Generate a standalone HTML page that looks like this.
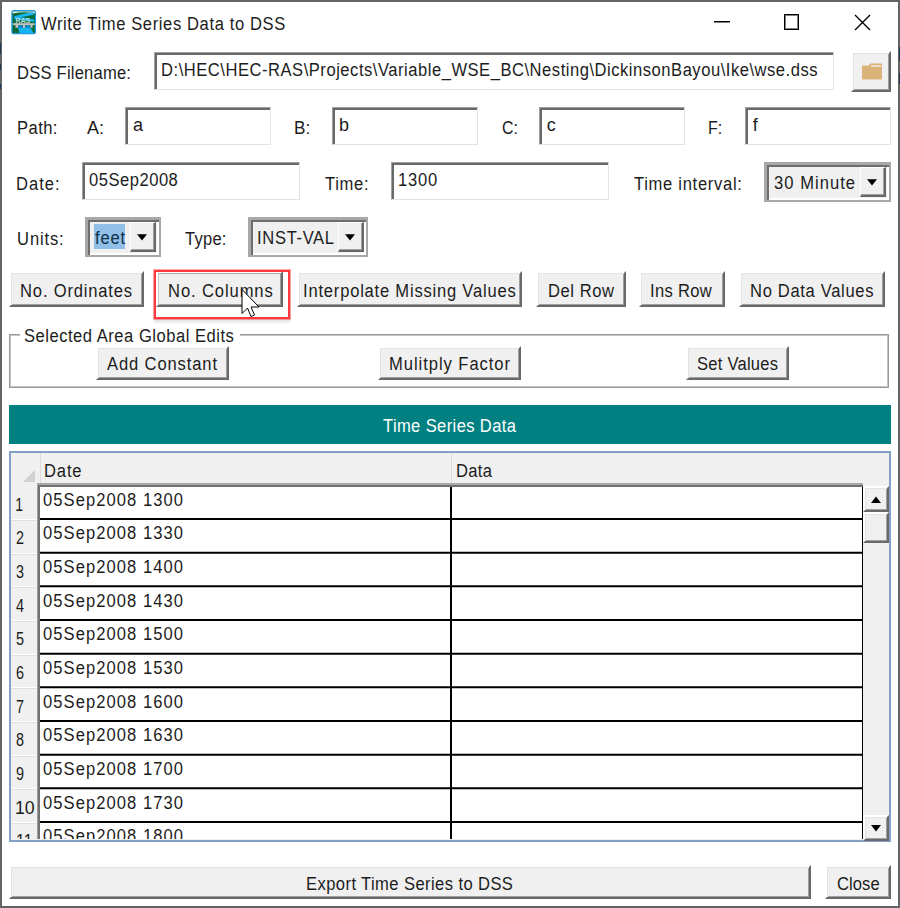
<!DOCTYPE html><html><head><meta charset="utf-8"><style>
html,body{margin:0;padding:0;width:900px;height:908px;overflow:hidden;background:#fff;}
body{position:relative;font-family:"Liberation Sans",sans-serif;}
.t{position:absolute;white-space:pre;line-height:normal;}
.r{position:absolute;box-sizing:border-box;}
</style></head><body>
<div class="r" style="left:0px;top:0px;width:900px;height:908px;border:2px solid #646464;"></div>
<div class="r" style="left:0px;top:43px;width:1px;height:11px;background:#1c3a58;"></div>
<div class="r" style="left:0px;top:64px;width:1px;height:6px;background:#1c3a58;"></div>
<div class="r" style="left:0px;top:84px;width:1px;height:5px;background:#1c3a58;"></div>
<div class="r" style="left:899px;top:47px;width:1px;height:14px;background:#1c3a58;"></div>
<div class="r" style="left:899px;top:73px;width:1px;height:11px;background:#1c3a58;"></div>
<svg class="r" style="left:11px;top:10px" width="26" height="26" viewBox="0 0 26 26">
<rect x="0.3" y="0" width="24.7" height="24.3" rx="2.5" fill="#1a9ae0"/>
<rect x="1.6" y="1.4" width="22.2" height="21.6" fill="#0a6b36"/>
<path d="M1.6 1.4 H23.8 V3.2 Q16 1.6 8 2.6 Q4 3 1.6 3.6Z" fill="#eef6f2"/>
<path d="M21.5 3.6 Q12 5 3.5 7.6 Q14 9 22 10.6" stroke="#1ab4f0" stroke-width="2.6" fill="none" stroke-linecap="round"/>
<text x="11.8" y="12.6" font-size="7" font-weight="bold" fill="#cfe8e8" text-anchor="middle" font-family="Liberation Sans" opacity="0.85">RAS</text>
<path d="M7 17.8 H19.5 L22.5 23 H8.5Z" fill="#14b4f0"/>
<rect x="1.6" y="13.2" width="22.2" height="1.9" fill="#c8c2c2"/>
<path d="M4.5 15 H7.2 V17.8 H4.5Z M12 15 H14 V17.8 H12Z M19.5 15 H21.5 V17.8 H19.5Z" fill="#c8c2c2"/>
<path d="M7.2 17.8 Q7.2 15 9.6 15 Q12 15 12 17.8Z M14 17.8 Q14 15 16.8 15 Q19.5 15 19.5 17.8Z" fill="#0a8ee0"/>
</svg>
<div class="t" style="left:40.50px;top:14.00px;font-size:18px;letter-spacing:0.668px;color:#1c1c1c;transform-origin:-0.00px 0;transform:translateX(0.00px) scaleX(0.92);">Write Time Series Data to DSS</div>
<div class="r" style="left:714px;top:21px;width:16px;height:1px;background:#000;"></div>
<div class="r" style="left:714px;top:22px;width:16px;height:1px;background:#000;opacity:0.5"></div>
<div class="r" style="left:784px;top:14px;width:15px;height:16px;border:1px solid #000;box-shadow:inset 0 0 0 1px rgba(0,0,0,0.5);"></div>
<svg class="r" style="left:853px;top:13px" width="19" height="19"><path d="M2 2L17 17M17 2L2 17" stroke="#000" stroke-width="1.4"/></svg>
<div class="t" style="left:18.00px;top:63.00px;font-size:18px;letter-spacing:0.225px;color:#1c1c1c;transform-origin:1.00px 0;transform:translateX(-1.00px) scaleX(0.92);">DSS Filename:</div>
<div class="r" style="left:154px;top:52px;width:680px;height:38px;background:#fff;border-top:1px solid #a0a0a0;border-left:1px solid #a0a0a0;border-right:1px solid #e3e3e3;border-bottom:1px solid #e3e3e3;box-shadow:inset 2px 2px 0 #696969;"></div>
<div class="t" style="left:162.00px;top:60.00px;font-size:18px;letter-spacing:0.570px;color:#1c1c1c;transform-origin:1.00px 0;transform:translateX(-1.00px) scaleX(0.92);">D:\HEC\HEC-RAS\Projects\Variable_WSE_BC\Nesting\DickinsonBayou\Ike\wse.dss</div>
<div class="r" style="left:851px;top:51px;width:40px;height:41px;background:#f0f0f0;border-top:2px solid #fff;border-left:2px solid #fff;border-right:2px solid #696969;border-bottom:2px solid #696969;box-shadow:inset 1px 1px 0 #e3e3e3,inset -1px -1px 0 #a0a0a0;"></div>
<svg class="r" style="left:861px;top:62px" width="22" height="18"><path d="M1 3.5 H8 L9 1.5 H21 V17.5 H1Z" fill="#dab378"/><rect x="10" y="3" width="10" height="2" fill="#ece0cc"/></svg>
<div class="t" style="left:17.50px;top:118.00px;font-size:18px;letter-spacing:0.455px;color:#1c1c1c;transform-origin:1.00px 0;transform:translateX(-1.00px) scaleX(0.92);">Path:</div>
<div class="t" style="left:87.00px;top:118.00px;font-size:18px;color:#1c1c1c;transform-origin:-0.00px 0;transform:translateX(0.00px) scaleX(1.000);">A:</div>
<div class="r" style="left:125px;top:107px;width:146px;height:38px;background:#fff;border-top:1px solid #a0a0a0;border-left:1px solid #a0a0a0;border-right:1px solid #e3e3e3;border-bottom:1px solid #e3e3e3;box-shadow:inset 2px 2px 0 #696969;"></div>
<div class="t" style="left:133.00px;top:115.00px;font-size:18px;letter-spacing:0.000px;color:#1c1c1c;">a</div>
<div class="t" style="left:295.00px;top:118.00px;font-size:18px;color:#1c1c1c;transform-origin:1.00px 0;transform:translateX(-1.00px) scaleX(0.953);">B:</div>
<div class="r" style="left:332px;top:107px;width:146px;height:38px;background:#fff;border-top:1px solid #a0a0a0;border-left:1px solid #a0a0a0;border-right:1px solid #e3e3e3;border-bottom:1px solid #e3e3e3;box-shadow:inset 2px 2px 0 #696969;"></div>
<div class="t" style="left:339.00px;top:115.00px;font-size:18px;letter-spacing:0.000px;color:#1c1c1c;">b</div>
<div class="t" style="left:501.70px;top:118.00px;font-size:18px;color:#1c1c1c;transform-origin:-0.00px 0;transform:translateX(0.00px) scaleX(0.882);">C:</div>
<div class="r" style="left:539px;top:107px;width:146px;height:38px;background:#fff;border-top:1px solid #a0a0a0;border-left:1px solid #a0a0a0;border-right:1px solid #e3e3e3;border-bottom:1px solid #e3e3e3;box-shadow:inset 2px 2px 0 #696969;"></div>
<div class="t" style="left:546.70px;top:115.00px;font-size:18px;letter-spacing:0.000px;color:#1c1c1c;">c</div>
<div class="t" style="left:709.30px;top:118.00px;font-size:18px;color:#1c1c1c;transform-origin:1.00px 0;transform:translateX(-1.00px) scaleX(0.886);">F:</div>
<div class="r" style="left:745px;top:107px;width:146px;height:38px;background:#fff;border-top:1px solid #a0a0a0;border-left:1px solid #a0a0a0;border-right:1px solid #e3e3e3;border-bottom:1px solid #e3e3e3;box-shadow:inset 2px 2px 0 #696969;"></div>
<div class="t" style="left:752.70px;top:115.00px;font-size:18px;letter-spacing:0.000px;color:#1c1c1c;">f</div>
<div class="t" style="left:17.00px;top:173.50px;font-size:18px;letter-spacing:1.076px;color:#1c1c1c;transform-origin:1.00px 0;transform:translateX(-1.00px) scaleX(0.92);">Date:</div>
<div class="r" style="left:82px;top:162px;width:218px;height:38px;background:#fff;border-top:1px solid #a0a0a0;border-left:1px solid #a0a0a0;border-right:1px solid #e3e3e3;border-bottom:1px solid #e3e3e3;box-shadow:inset 2px 2px 0 #696969;"></div>
<div class="t" style="left:89.00px;top:170.30px;font-size:18px;letter-spacing:0.555px;color:#1c1c1c;transform-origin:-0.00px 0;transform:translateX(0.00px) scaleX(0.92);">05Sep2008</div>
<div class="t" style="left:325.00px;top:173.50px;font-size:18px;letter-spacing:0.743px;color:#1c1c1c;transform-origin:-0.00px 0;transform:translateX(0.00px) scaleX(0.92);">Time:</div>
<div class="r" style="left:391px;top:162px;width:218px;height:38px;background:#fff;border-top:1px solid #a0a0a0;border-left:1px solid #a0a0a0;border-right:1px solid #e3e3e3;border-bottom:1px solid #e3e3e3;box-shadow:inset 2px 2px 0 #696969;"></div>
<div class="t" style="left:399.00px;top:170.30px;font-size:18px;letter-spacing:0.866px;color:#1c1c1c;transform-origin:1.00px 0;transform:translateX(-1.00px) scaleX(0.92);">1300</div>
<div class="t" style="left:634.00px;top:173.50px;font-size:18px;letter-spacing:0.765px;color:#1c1c1c;transform-origin:-0.00px 0;transform:translateX(0.00px) scaleX(0.92);">Time interval:</div>
<div class="r" style="left:764px;top:162px;width:127px;height:40px;background:#f0f0f0;border-top:3px solid #a8a8a8;border-left:3px solid #a8a8a8;border-right:2px solid #a8a8a8;border-bottom:2px solid #a8a8a8;box-shadow:inset 2px 2px 0 #6e6e6e,inset -2px -2px 0 #fff;"></div>
<div class="r" style="left:860px;top:167px;width:26px;height:30px;background:#f0f0f0;border-top:1px solid #fff;border-left:1px solid #fff;border-right:2px solid #696969;border-bottom:2px solid #696969;box-shadow:inset -1px -1px 0 #a0a0a0;"></div>
<svg class="r" style="left:866.0px;top:178.0px" width="12" height="8"><path d="M1 1.2H11L6 7.6Z" fill="#000"/></svg>
<div class="t" style="left:774.00px;top:173.00px;font-size:18px;letter-spacing:1.126px;color:#1c1c1c;transform-origin:-0.00px 0;transform:translateX(0.00px) scaleX(0.92);">30 Minute</div>
<div class="t" style="left:17.70px;top:228.60px;font-size:18px;letter-spacing:0.937px;color:#1c1c1c;transform-origin:1.00px 0;transform:translateX(-1.00px) scaleX(0.92);">Units:</div>
<div class="r" style="left:85px;top:217px;width:76px;height:40px;background:#f0f0f0;border-top:3px solid #a8a8a8;border-left:3px solid #a8a8a8;border-right:2px solid #a8a8a8;border-bottom:2px solid #a8a8a8;box-shadow:inset 2px 2px 0 #6e6e6e,inset -2px -2px 0 #fff;"></div>
<div class="r" style="left:130px;top:222px;width:26px;height:30px;background:#f0f0f0;border-top:1px solid #fff;border-left:1px solid #fff;border-right:2px solid #696969;border-bottom:2px solid #696969;box-shadow:inset -1px -1px 0 #a0a0a0;"></div>
<svg class="r" style="left:136.0px;top:233.0px" width="12" height="8"><path d="M1 1.2H11L6 7.6Z" fill="#000"/></svg>
<div class="r" style="left:94px;top:224px;width:31px;height:25px;background:#90c0e8;"></div>
<div class="t" style="left:95.00px;top:228.00px;font-size:18px;letter-spacing:0.862px;color:#10304a;transform-origin:-0.00px 0;transform:translateX(0.00px) scaleX(0.92);">feet</div>
<div class="t" style="left:184.50px;top:228.60px;font-size:18px;letter-spacing:0.250px;color:#1c1c1c;transform-origin:-0.00px 0;transform:translateX(0.00px) scaleX(0.92);">Type:</div>
<div class="r" style="left:248px;top:217px;width:120px;height:40px;background:#f0f0f0;border-top:3px solid #a8a8a8;border-left:3px solid #a8a8a8;border-right:2px solid #a8a8a8;border-bottom:2px solid #a8a8a8;box-shadow:inset 2px 2px 0 #6e6e6e,inset -2px -2px 0 #fff;"></div>
<div class="r" style="left:338px;top:222px;width:26px;height:30px;background:#f0f0f0;border-top:1px solid #fff;border-left:1px solid #fff;border-right:2px solid #696969;border-bottom:2px solid #696969;box-shadow:inset -1px -1px 0 #a0a0a0;"></div>
<svg class="r" style="left:344.0px;top:233.0px" width="12" height="8"><path d="M1 1.2H11L6 7.6Z" fill="#000"/></svg>
<div class="t" style="left:257.60px;top:228.00px;font-size:18px;letter-spacing:0.704px;color:#1c1c1c;transform-origin:1.00px 0;transform:translateX(-1.00px) scaleX(0.92);">INST-VAL</div>
<div class="r" style="left:9px;top:271px;width:135px;height:36px;background:#f0f0f0;border-top:2px solid #fff;border-left:2px solid #fff;border-right:2px solid #696969;border-bottom:2px solid #696969;box-shadow:inset 1px 1px 0 #e3e3e3,inset -1px -1px 0 #a0a0a0;"></div>
<div class="t" style="left:20.70px;top:280.70px;font-size:18px;letter-spacing:0.884px;color:#1c1c1c;transform-origin:1.00px 0;transform:translateX(-1.00px) scaleX(0.92);">No. Ordinates</div>
<div class="r" style="left:156px;top:271px;width:127px;height:36px;background:#f0f0f0;border-top:2px solid #fff;border-left:2px solid #fff;border-right:2px solid #696969;border-bottom:2px solid #696969;box-shadow:inset 1px 1px 0 #e3e3e3,inset -1px -1px 0 #a0a0a0;"></div>
<div class="r" style="left:158px;top:273px;width:123px;height:32px;border-top:1px solid #a8a8a8;border-left:1px solid #c8c8c8;"></div>
<div class="t" style="left:169.00px;top:280.70px;font-size:18px;letter-spacing:0.968px;color:#1c1c1c;transform-origin:1.00px 0;transform:translateX(-1.00px) scaleX(0.92);">No. Columns</div>
<div class="r" style="left:297px;top:271px;width:225px;height:36px;background:#f0f0f0;border-top:2px solid #fff;border-left:2px solid #fff;border-right:2px solid #696969;border-bottom:2px solid #696969;box-shadow:inset 1px 1px 0 #e3e3e3,inset -1px -1px 0 #a0a0a0;"></div>
<div class="t" style="left:304.00px;top:280.70px;font-size:18px;letter-spacing:0.853px;color:#1c1c1c;transform-origin:1.00px 0;transform:translateX(-1.00px) scaleX(0.92);">Interpolate Missing Values</div>
<div class="r" style="left:536px;top:271px;width:90px;height:36px;background:#f0f0f0;border-top:2px solid #fff;border-left:2px solid #fff;border-right:2px solid #696969;border-bottom:2px solid #696969;box-shadow:inset 1px 1px 0 #e3e3e3,inset -1px -1px 0 #a0a0a0;"></div>
<div class="t" style="left:548.50px;top:280.70px;font-size:18px;letter-spacing:0.584px;color:#1c1c1c;transform-origin:1.00px 0;transform:translateX(-1.00px) scaleX(0.92);">Del Row</div>
<div class="r" style="left:639px;top:271px;width:86px;height:36px;background:#f0f0f0;border-top:2px solid #fff;border-left:2px solid #fff;border-right:2px solid #696969;border-bottom:2px solid #696969;box-shadow:inset 1px 1px 0 #e3e3e3,inset -1px -1px 0 #a0a0a0;"></div>
<div class="t" style="left:651.30px;top:280.70px;font-size:18px;letter-spacing:0.340px;color:#1c1c1c;transform-origin:1.00px 0;transform:translateX(-1.00px) scaleX(0.92);">Ins Row</div>
<div class="r" style="left:739px;top:271px;width:146px;height:36px;background:#f0f0f0;border-top:2px solid #fff;border-left:2px solid #fff;border-right:2px solid #696969;border-bottom:2px solid #696969;box-shadow:inset 1px 1px 0 #e3e3e3,inset -1px -1px 0 #a0a0a0;"></div>
<div class="t" style="left:750.80px;top:280.70px;font-size:18px;letter-spacing:0.724px;color:#1c1c1c;transform-origin:1.00px 0;transform:translateX(-1.00px) scaleX(0.92);">No Data Values</div>
<div class="r" style="left:154px;top:270px;width:136px;height:49px;border:2px solid #ff3a3f;box-shadow:0 0 0 1px rgba(255,58,63,0.45),0 3px 3px rgba(0,0,0,0.12);"></div>
<div class="r" style="left:9px;top:334px;width:880px;height:54px;border:1px solid #9a9a9a;box-shadow:inset 1px 1px 0 #c4c4c4,inset -1px -1px 0 #c4c4c4;"></div>
<div class="r" style="left:20px;top:326px;width:220px;height:16px;background:#fff;"></div>
<div class="t" style="left:23.50px;top:325.70px;font-size:18px;letter-spacing:0.560px;color:#1c1c1c;transform-origin:-0.00px 0;transform:translateX(0.00px) scaleX(0.92);">Selected Area Global Edits</div>
<div class="r" style="left:96px;top:346px;width:133px;height:34px;background:#f0f0f0;border-top:2px solid #fff;border-left:2px solid #fff;border-right:2px solid #696969;border-bottom:2px solid #696969;box-shadow:inset 1px 1px 0 #e3e3e3,inset -1px -1px 0 #a0a0a0;"></div>
<div class="t" style="left:107.30px;top:353.90px;font-size:18px;letter-spacing:0.954px;color:#1c1c1c;transform-origin:-0.00px 0;transform:translateX(0.00px) scaleX(0.92);">Add Constant</div>
<div class="r" style="left:378px;top:346px;width:143px;height:34px;background:#f0f0f0;border-top:2px solid #fff;border-left:2px solid #fff;border-right:2px solid #696969;border-bottom:2px solid #696969;box-shadow:inset 1px 1px 0 #e3e3e3,inset -1px -1px 0 #a0a0a0;"></div>
<div class="t" style="left:390.40px;top:353.90px;font-size:18px;letter-spacing:1.029px;color:#1c1c1c;transform-origin:1.00px 0;transform:translateX(-1.00px) scaleX(0.92);">Mulitply Factor</div>
<div class="r" style="left:686px;top:346px;width:103px;height:34px;background:#f0f0f0;border-top:2px solid #fff;border-left:2px solid #fff;border-right:2px solid #696969;border-bottom:2px solid #696969;box-shadow:inset 1px 1px 0 #e3e3e3,inset -1px -1px 0 #a0a0a0;"></div>
<div class="t" style="left:697.00px;top:353.90px;font-size:18px;letter-spacing:0.258px;color:#1c1c1c;transform-origin:-0.00px 0;transform:translateX(0.00px) scaleX(0.92);">Set Values</div>
<div class="r" style="left:9px;top:405px;width:882px;height:39px;background:#008080;"></div>
<div class="t" style="left:383.30px;top:415.60px;font-size:18px;letter-spacing:0.412px;color:#fff;transform-origin:-0.00px 0;transform:translateX(0.00px) scaleX(0.92);">Time Series Data</div>
<div class="r" style="left:9px;top:451px;width:882px;height:391px;border:2px solid #82a0c4;background:#f0f0f0;"></div>
<div class="t" style="left:45.00px;top:461.00px;font-size:18px;letter-spacing:0.888px;color:#1c1c1c;transform-origin:1.00px 0;transform:translateX(-1.00px) scaleX(0.92);">Date</div>
<div class="t" style="left:457.00px;top:461.00px;font-size:18px;letter-spacing:0.301px;color:#1c1c1c;transform-origin:1.00px 0;transform:translateX(-1.00px) scaleX(0.92);">Data</div>
<div class="r" style="left:451px;top:453px;width:1px;height:32px;background:#dcdcdc;"></div>
<div class="r" style="left:40px;top:453px;width:1px;height:32px;background:#dcdcdc;"></div>
<svg class="r" style="left:22px;top:469px" width="14" height="14"><path d="M13 1V13H1Z" fill="#d0d0d0"/></svg>
<div class="r" style="left:11px;top:483px;width:852px;height:356px;overflow:hidden">
<div class="r" style="left:26px;top:0px;width:826px;height:417px;background:#fff;border-top:2px solid #a8a8a8;border-left:1px solid #a0a0a0;box-shadow:inset 2px 2px 0 #727272;"></div>
<div class="r" style="left:0px;top:36px;width:26px;height:1px;background:#fff;"></div>
<div class="r" style="left:0px;top:37px;width:26px;height:1px;background:#e0e0e0;"></div>
<div class="r" style="left:0px;top:70px;width:26px;height:1px;background:#fff;"></div>
<div class="r" style="left:0px;top:71px;width:26px;height:1px;background:#e0e0e0;"></div>
<div class="r" style="left:0px;top:103px;width:26px;height:1px;background:#fff;"></div>
<div class="r" style="left:0px;top:104px;width:26px;height:1px;background:#e0e0e0;"></div>
<div class="r" style="left:0px;top:137px;width:26px;height:1px;background:#fff;"></div>
<div class="r" style="left:0px;top:138px;width:26px;height:1px;background:#e0e0e0;"></div>
<div class="r" style="left:0px;top:171px;width:26px;height:1px;background:#fff;"></div>
<div class="r" style="left:0px;top:172px;width:26px;height:1px;background:#e0e0e0;"></div>
<div class="r" style="left:0px;top:204px;width:26px;height:1px;background:#fff;"></div>
<div class="r" style="left:0px;top:205px;width:26px;height:1px;background:#e0e0e0;"></div>
<div class="r" style="left:0px;top:238px;width:26px;height:1px;background:#fff;"></div>
<div class="r" style="left:0px;top:239px;width:26px;height:1px;background:#e0e0e0;"></div>
<div class="r" style="left:0px;top:272px;width:26px;height:1px;background:#fff;"></div>
<div class="r" style="left:0px;top:273px;width:26px;height:1px;background:#e0e0e0;"></div>
<div class="r" style="left:0px;top:305px;width:26px;height:1px;background:#fff;"></div>
<div class="r" style="left:0px;top:306px;width:26px;height:1px;background:#e0e0e0;"></div>
<div class="r" style="left:0px;top:339px;width:26px;height:1px;background:#fff;"></div>
<div class="r" style="left:0px;top:340px;width:26px;height:1px;background:#e0e0e0;"></div>
<svg class="r" style="left:0;top:0" width="852" height="356"><path d="M29 36.00H852" stroke="#000" stroke-width="2"/><path d="M29 69.67H852" stroke="#000" stroke-width="2"/><path d="M29 103.34H852" stroke="#000" stroke-width="2"/><path d="M29 137.01H852" stroke="#000" stroke-width="2"/><path d="M29 170.68H852" stroke="#000" stroke-width="2"/><path d="M29 204.35H852" stroke="#000" stroke-width="2"/><path d="M29 238.02H852" stroke="#000" stroke-width="2"/><path d="M29 271.69H852" stroke="#000" stroke-width="2"/><path d="M29 305.36H852" stroke="#000" stroke-width="2"/><path d="M29 339.03H852" stroke="#000" stroke-width="2"/></svg>
<div class="r" style="left:439px;top:4px;width:2px;height:413px;background:#000;"></div>
<div class="r" style="left:851px;top:4px;width:2px;height:413px;background:#000;"></div>
<div class="t" style="left:32.00px;top:6.60px;font-size:18px;letter-spacing:1.158px;color:#1c1c1c;transform-origin:-0.00px 0;transform:translateX(0.00px) scaleX(0.92);">05Sep2008 1300</div>
<div class="t" style="left:5.20px;top:11.70px;font-size:18px;color:#1c1c1c;transform-origin:1.00px 0;transform:translateX(-1.00px) scaleX(0.778);">1</div>
<div class="t" style="left:32.00px;top:40.27px;font-size:18px;letter-spacing:1.158px;color:#1c1c1c;transform-origin:-0.00px 0;transform:translateX(0.00px) scaleX(0.92);">05Sep2008 1330</div>
<div class="t" style="left:5.20px;top:45.37px;font-size:18px;color:#1c1c1c;transform-origin:-0.00px 0;transform:translateX(0.00px) scaleX(0.800);">2</div>
<div class="t" style="left:32.00px;top:73.94px;font-size:18px;letter-spacing:1.158px;color:#1c1c1c;transform-origin:-0.00px 0;transform:translateX(0.00px) scaleX(0.92);">05Sep2008 1400</div>
<div class="t" style="left:5.20px;top:79.04px;font-size:18px;color:#1c1c1c;transform-origin:-0.00px 0;transform:translateX(0.00px) scaleX(0.800);">3</div>
<div class="t" style="left:32.00px;top:107.61px;font-size:18px;letter-spacing:1.158px;color:#1c1c1c;transform-origin:-0.00px 0;transform:translateX(0.00px) scaleX(0.92);">05Sep2008 1430</div>
<div class="t" style="left:5.20px;top:112.71px;font-size:18px;color:#1c1c1c;transform-origin:-0.00px 0;transform:translateX(0.00px) scaleX(0.800);">4</div>
<div class="t" style="left:32.00px;top:141.28px;font-size:18px;letter-spacing:1.158px;color:#1c1c1c;transform-origin:-0.00px 0;transform:translateX(0.00px) scaleX(0.92);">05Sep2008 1500</div>
<div class="t" style="left:5.20px;top:146.38px;font-size:18px;color:#1c1c1c;transform-origin:-0.00px 0;transform:translateX(0.00px) scaleX(0.800);">5</div>
<div class="t" style="left:32.00px;top:174.95px;font-size:18px;letter-spacing:1.158px;color:#1c1c1c;transform-origin:-0.00px 0;transform:translateX(0.00px) scaleX(0.92);">05Sep2008 1530</div>
<div class="t" style="left:5.20px;top:180.05px;font-size:18px;color:#1c1c1c;transform-origin:-0.00px 0;transform:translateX(0.00px) scaleX(0.800);">6</div>
<div class="t" style="left:32.00px;top:208.62px;font-size:18px;letter-spacing:1.158px;color:#1c1c1c;transform-origin:-0.00px 0;transform:translateX(0.00px) scaleX(0.92);">05Sep2008 1600</div>
<div class="t" style="left:5.20px;top:213.72px;font-size:18px;color:#1c1c1c;transform-origin:-0.00px 0;transform:translateX(0.00px) scaleX(0.800);">7</div>
<div class="t" style="left:32.00px;top:242.29px;font-size:18px;letter-spacing:1.158px;color:#1c1c1c;transform-origin:-0.00px 0;transform:translateX(0.00px) scaleX(0.92);">05Sep2008 1630</div>
<div class="t" style="left:5.20px;top:247.39px;font-size:18px;color:#1c1c1c;transform-origin:-0.00px 0;transform:translateX(0.00px) scaleX(0.800);">8</div>
<div class="t" style="left:32.00px;top:275.96px;font-size:18px;letter-spacing:1.158px;color:#1c1c1c;transform-origin:-0.00px 0;transform:translateX(0.00px) scaleX(0.92);">05Sep2008 1700</div>
<div class="t" style="left:5.20px;top:281.06px;font-size:18px;color:#1c1c1c;transform-origin:-0.00px 0;transform:translateX(0.00px) scaleX(0.800);">9</div>
<div class="t" style="left:32.00px;top:309.63px;font-size:18px;letter-spacing:1.158px;color:#1c1c1c;transform-origin:-0.00px 0;transform:translateX(0.00px) scaleX(0.92);">05Sep2008 1730</div>
<div class="t" style="left:5.30px;top:314.73px;font-size:18px;color:#1c1c1c;transform-origin:1.00px 0;transform:translateX(-1.00px) scaleX(0.984);">10</div>
<div class="t" style="left:32.00px;top:343.30px;font-size:18px;letter-spacing:1.158px;color:#1c1c1c;transform-origin:-0.00px 0;transform:translateX(0.00px) scaleX(0.92);">05Sep2008 1800</div>
<div class="t" style="left:5.50px;top:348.40px;font-size:18px;color:#1c1c1c;transform-origin:1.00px 0;transform:translateX(-1.00px) scaleX(0.877);">11</div>
</div>
<div class="r" style="left:863px;top:486px;width:26px;height:355px;background:#f0f0f0;"></div>
<div class="r" style="left:863px;top:486px;width:26px;height:26px;background:#f0f0f0;border-top:2px solid #fff;border-left:2px solid #fff;border-right:2px solid #696969;border-bottom:2px solid #696969;box-shadow:inset 1px 1px 0 #e3e3e3,inset -1px -1px 0 #a0a0a0;"></div>
<svg class="r" style="left:870px;top:495px" width="12" height="9"><path d="M1 8H11L6 1.5Z" fill="#000"/></svg>
<div class="r" style="left:863px;top:512px;width:26px;height:31px;background:#f0f0f0;border-top:2px solid #fff;border-left:2px solid #fff;border-right:2px solid #696969;border-bottom:2px solid #696969;box-shadow:inset 1px 1px 0 #e3e3e3,inset -1px -1px 0 #a0a0a0;"></div>
<div class="r" style="left:863px;top:815px;width:26px;height:26px;background:#f0f0f0;border-top:2px solid #fff;border-left:2px solid #fff;border-right:2px solid #696969;border-bottom:2px solid #696969;box-shadow:inset 1px 1px 0 #e3e3e3,inset -1px -1px 0 #a0a0a0;"></div>
<svg class="r" style="left:870px;top:824px" width="12" height="9"><path d="M1 1H11L6 7.5Z" fill="#000"/></svg>
<div class="r" style="left:9px;top:865px;width:802px;height:34px;background:#f0f0f0;border-top:2px solid #fff;border-left:2px solid #fff;border-right:2px solid #696969;border-bottom:2px solid #696969;box-shadow:inset 1px 1px 0 #e3e3e3,inset -1px -1px 0 #a0a0a0;"></div>
<div class="t" style="left:306.50px;top:873.70px;font-size:18px;letter-spacing:0.447px;color:#1c1c1c;transform-origin:1.00px 0;transform:translateX(-1.00px) scaleX(0.92);">Export Time Series to DSS</div>
<div class="r" style="left:825px;top:865px;width:66px;height:34px;background:#f0f0f0;border-top:2px solid #fff;border-left:2px solid #fff;border-right:2px solid #696969;border-bottom:2px solid #696969;box-shadow:inset 1px 1px 0 #e3e3e3,inset -1px -1px 0 #a0a0a0;"></div>
<div class="t" style="left:836.70px;top:873.70px;font-size:18px;letter-spacing:0.074px;color:#1c1c1c;transform-origin:-0.00px 0;transform:translateX(0.00px) scaleX(0.92);">Close</div>
<svg class="r" style="left:240px;top:288px" width="24" height="32"><path d="M2 1.5 V25.5 L7.5 20 L11 28.5 L14.5 27 L11 19 H19 Z" fill="#fff" stroke="#000" stroke-width="1" stroke-linejoin="miter"/></svg>
</body></html>
